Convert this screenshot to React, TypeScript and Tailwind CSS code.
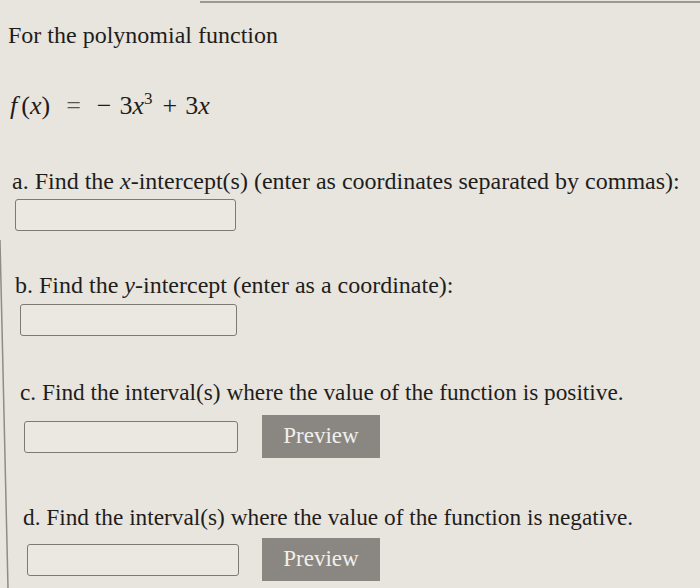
import React from "react";

const serif = { fontFamily: '"Liberation Serif", "Times New Roman", serif' };

function Input({ w = 221 }: { w?: number }) {
  return (
    <div
      className="h-[32px] rounded-[3px] border-[1.5px] border-[#7d7a75] bg-[#ebe8e2]"
      style={{ width: w }}
    />
  );
}

function Preview() {
  return (
    <div className="flex h-[43px] w-[118px] items-center justify-center bg-[#8a8782] text-[23px] text-[#f2efea]">
      Preview
    </div>
  );
}

export default function App() {
  return (
    <div
      className="relative h-[588px] w-[700px] overflow-hidden bg-[#e8e5df] text-[#1f1d1b]"
      style={serif}
    >
      {/* top edge line */}
      <div className="absolute left-[200px] right-0 top-[1px] h-[2px] bg-[#9c9893]" />
      {/* slanted left edge */}
      <svg className="absolute left-0 top-0" width="20" height="588">
        <line x1="0" y1="240" x2="8" y2="588" stroke="#8f8b86" strokeWidth="1.5" />
      </svg>

      <div className="pl-[8px] pt-[21px] text-[24px] leading-[28px]">
        For the polynomial function
      </div>

      <div className="mt-[43px] flex items-baseline pl-[10px] text-[26px] leading-[28px]">
        <span className="italic">f</span>
        <span className="ml-[4px]">(</span>
        <span className="italic">x</span>
        <span>)</span>
        <span className="ml-[16px] text-[#555]">=</span>
        <span className="ml-[16px]">−</span>
        <span className="ml-[8px]">3</span>
        <span className="italic">x</span>
        <span className="relative -top-[10px] text-[17px]">3</span>
        <span className="ml-[10px]">+</span>
        <span className="ml-[8px]">3</span>
        <span className="italic">x</span>
      </div>

      <div className="mt-[44px] pl-[12px] text-[24px] leading-[28px]">
        a. Find the <span className="italic">x</span>-intercept(s) (enter as coordinates separated by commas):
      </div>
      <div className="mt-[4px] pl-[15px]">
        <Input w={221} />
      </div>

      <div className="mt-[40px] pl-[15px] text-[24px] leading-[28px]">
        b. Find the <span className="italic">y</span>-intercept (enter as a coordinate):
      </div>
      <div className="mt-[5px] pl-[20px]">
        <Input w={217} />
      </div>

      <div className="mt-[42px] pl-[20px] text-[23.3px] leading-[28px]">
        c. Find the interval(s) where the value of the function is positive.
      </div>
      <div className="mt-[9px] flex items-center pl-[24px]">
        <Input w={214} />
        <div className="ml-[24px]">
          <Preview />
        </div>
      </div>

      <div className="mt-[45px] pl-[23px] text-[23.3px] leading-[28px]">
        d. Find the interval(s) where the value of the function is negative.
      </div>
      <div className="mt-[7px] flex items-center pl-[27px]">
        <Input w={212} />
        <div className="ml-[23px]">
          <Preview />
        </div>
      </div>
    </div>
  );
}
